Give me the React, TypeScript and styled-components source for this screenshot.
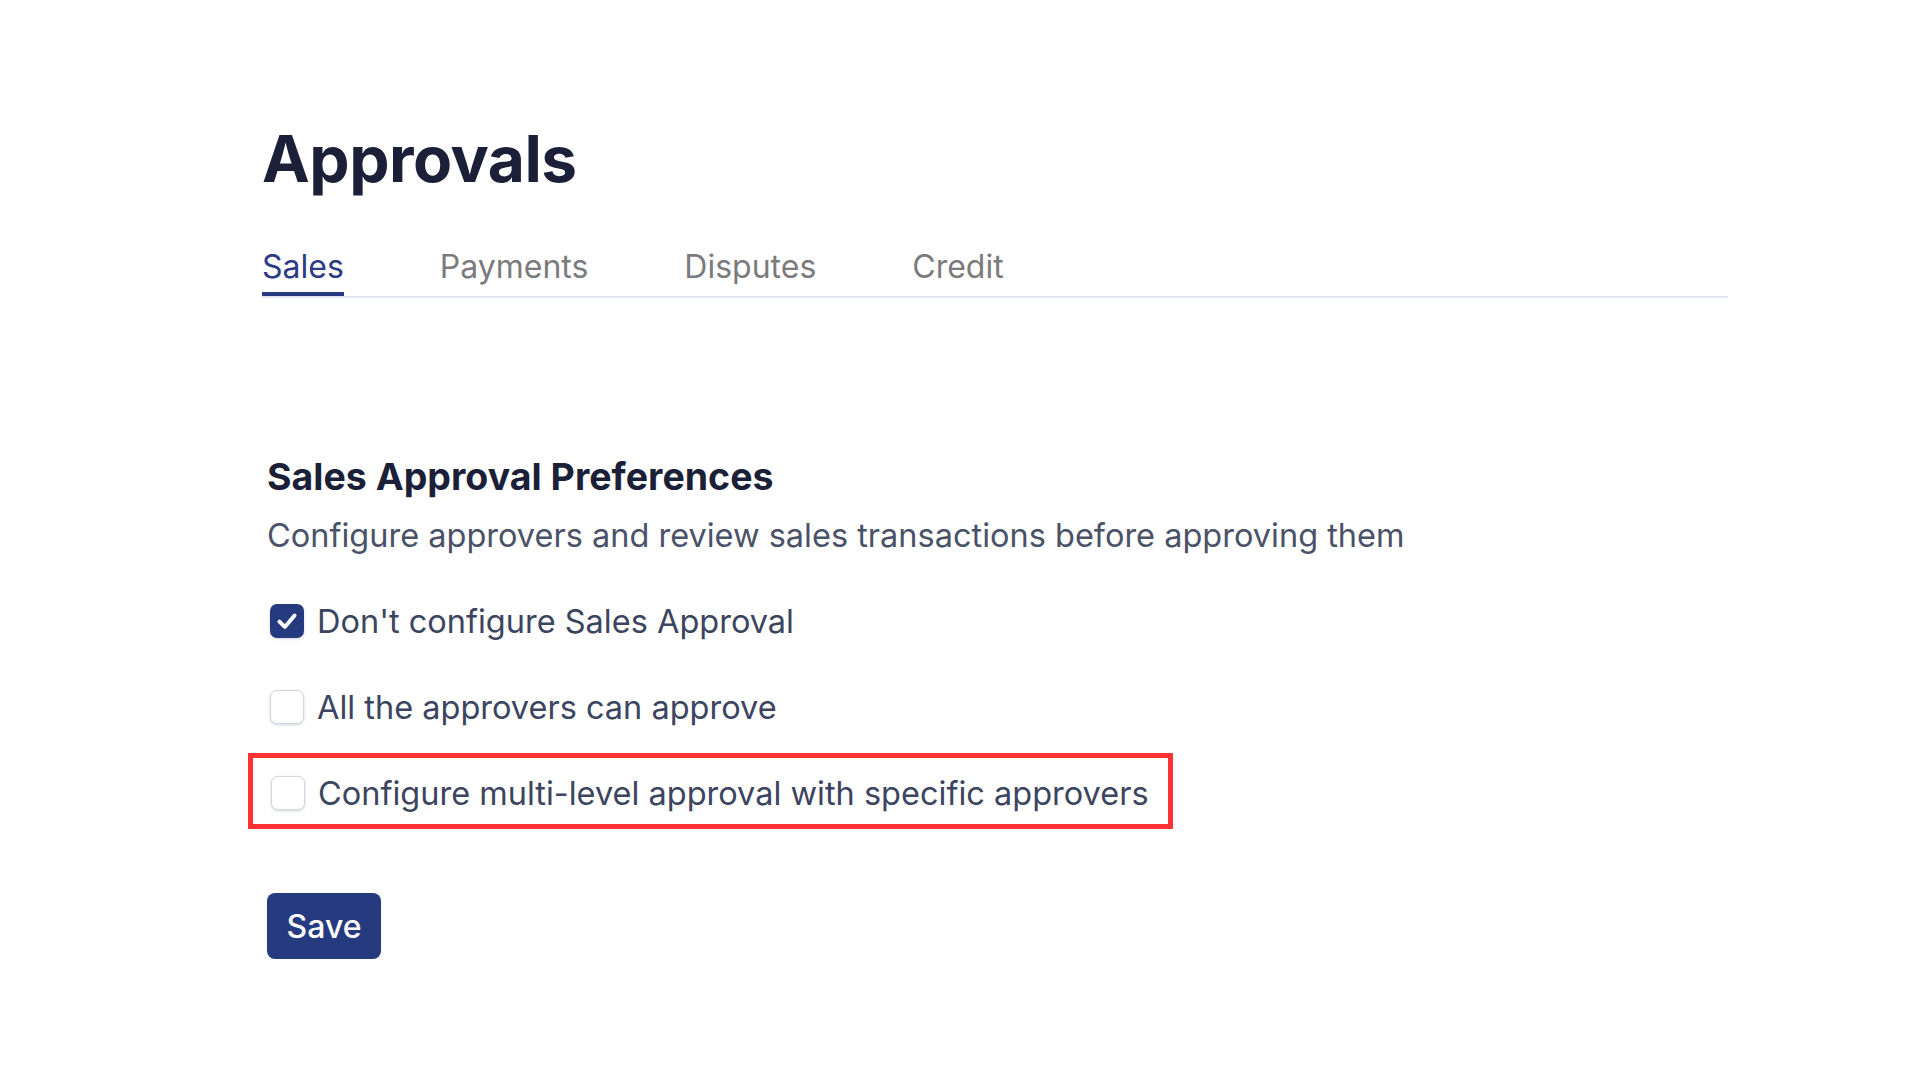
import React from "react";

import styled, { createGlobalStyle } from "styled-components";

const GlobalStyle = createGlobalStyle`
  html, body {
    margin: 0;
    padding: 0;
    background: #ffffff;
  }
  body {
    font-family: Inter, "Noto Sans", "Liberation Sans", sans-serif;
    -webkit-font-smoothing: antialiased;
  }
`;

const Page = styled.main`
  width: 1920px;
  height: 1080px;
  box-sizing: border-box;
  padding: 127px 192px 0 262px;
  background: #ffffff;
`;

const Title = styled.h1`
  margin: 0;
  font-size: 64px;
  line-height: 1;
  font-weight: 700;
  letter-spacing: -0.5px;
  color: #1b1f38;
`;

const TabBar = styled.nav`
  display: flex;
  gap: 96px;
  margin-top: 60px;
  border-bottom: 2px solid #e4e7ef;
`;

const Tab = styled.button<{ $active?: boolean }>`
  all: unset;
  cursor: pointer;
  font-family: inherit;
  font-size: 32px;
  line-height: 1;
  padding-bottom: 9px;
  color: ${(p) => (p.$active ? "#2c3c84" : "#7b7b7d")};
  border-bottom: 4px solid ${(p) => (p.$active ? "#263a80" : "transparent")};
`;

const Section = styled.section`
  margin-top: 160px;
  padding-left: 5px;
`;

const Heading = styled.h2`
  margin: 0;
  font-size: 37.5px;
  line-height: 1;
  font-weight: 700;
  color: #1b1f38;
`;

const Description = styled.p`
  margin: 24px 0 0;
  font-size: 32.5px;
  line-height: 1;
  color: #4a5268;
`;

const OptionList = styled.div`
  display: flex;
  flex-direction: column;
  align-items: flex-start;
  gap: 46px;
  margin-top: 49px;
`;

const OptionRow = styled.label`
  display: flex;
  align-items: center;
  gap: 13px;
  height: 40px;
  padding-left: 3px;
  font-size: 32.5px;
  color: #3c4560;
  cursor: pointer;
`;

const Box = styled.span<{ $checked?: boolean }>`
  display: inline-flex;
  align-items: center;
  justify-content: center;
  width: 34px;
  height: 34px;
  flex: none;
  box-sizing: border-box;
  border-radius: 7px;
  background: ${(p) => (p.$checked ? "#263a80" : "#ffffff")};
  border: ${(p) => (p.$checked ? "none" : "1.5px solid #d3d6de")};
  box-shadow: 0 1px 3px rgba(30, 40, 70, 0.2);
`;

const Highlight = styled.div`
  margin: -20px 0 0 -19px;
  padding: 15px 19px 11px 15px;
  border: 5px solid #ff3333;
`;

const SaveButton = styled.button`
  all: unset;
  cursor: pointer;
  margin-top: 64px;
  width: 114px;
  height: 66px;
  display: flex;
  align-items: center;
  justify-content: center;
  box-sizing: border-box;
  border-radius: 8px;
  background: #263a80;
  color: #ffffff;
  font-family: inherit;
  font-size: 32px;
  font-weight: 500;
`;

const CheckMark = () => (
  <svg width="26" height="26" viewBox="0 0 24 24" fill="none">
    <polyline
      points="5 12.5 10 17.5 19 7"
      stroke="#ffffff"
      strokeWidth="3.6"
      strokeLinecap="round"
      strokeLinejoin="round"
    />
  </svg>
);

interface OptionProps {
  checked?: boolean;
  children: React.ReactNode;
}

const Option: React.FC<OptionProps> = ({ checked, children }) => (
  <OptionRow>
    <Box $checked={checked}>{checked ? <CheckMark /> : null}</Box>
    {children}
  </OptionRow>
);

const tabs = ["Sales", "Payments", "Disputes", "Credit"];

const App: React.FC = () => {
  return (
    <>
      <GlobalStyle />
      <Page>
        <Title>Approvals</Title>
        <TabBar>
          {tabs.map((t) => (
            <Tab key={t} $active={t === "Sales"}>
              {t}
            </Tab>
          ))}
        </TabBar>
        <Section>
          <Heading>Sales Approval Preferences</Heading>
          <Description>
            Configure approvers and review sales transactions before approving them
          </Description>
          <OptionList>
            <Option checked>Don't configure Sales Approval</Option>
            <Option>All the approvers can approve</Option>
            <Highlight>
              <Option>Configure multi-level approval with specific approvers</Option>
            </Highlight>
          </OptionList>
          <SaveButton>Save</SaveButton>
        </Section>
      </Page>
    </>
  );
};

export default App;
